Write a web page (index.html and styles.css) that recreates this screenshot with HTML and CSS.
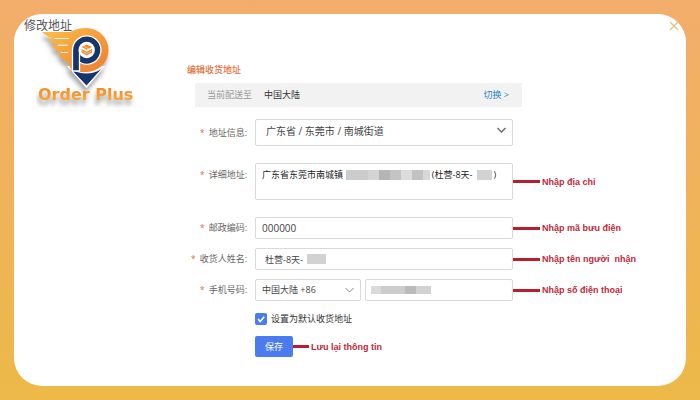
FILE: index.html
```
<!DOCTYPE html>
<html lang="zh-CN">
<head>
	<meta charset="utf-8">
	<title>修改地址</title>
	<link rel="stylesheet" href="styles.css">
</head>
<body>
	<div class="card">
		<header class="header">
			<h1 class="title">修改地址</h1>
			<button type="button" class="close" aria-label="Close">
				<svg width="10" height="10" viewBox="0 0 10 10"><path d="M1 1L9 9M9 1L1 9" stroke="#d8c98a" stroke-width="1.4"/></svg>
			</button>
		</header>
		<main class="main">
			<div class="brand">
				<svg class="logo" viewBox="36 22 104 86" role="img" aria-label="Order Plus">
					<defs>
						<linearGradient id="wing" x1="0" y1="0" x2="1" y2="1">
							<stop offset="0" stop-color="#fbc04a"/>
							<stop offset="1" stop-color="#ef7d2c"/>
						</linearGradient>
						<linearGradient id="word" x1="0" y1="0" x2="0" y2="1">
							<stop offset="0" stop-color="#ee8526"/>
							<stop offset="1" stop-color="#f9b03c"/>
						</linearGradient>
						<filter id="shadow" x="-20%" y="-20%" width="150%" height="170%">
							<feDropShadow dx="-1" dy="5" stdDeviation="2" flood-color="#555" flood-opacity="0.5"/>
						</filter>
					</defs>
					<g filter="url(#shadow)">
						<path d="M67 66L86.500 88L105 66Z" fill="#fff"/>
						<path d="M42 32H70C75 29.500 80 28 86.500 28A22 22 0 0 1 86.500 72H71L69 63C64 61 60 57 58 52.500H63C58 51.500 54 49 51 45H61C54 44 50 42 48 38.500H58C51 38.500 46 36 42 32Z" fill="url(#wing)"/>
						<path d="M54 38.500H69M58 45.200H68M61 52.500H68" stroke="#fff" stroke-width="0.900"/>
						<path d="M68.500 67C79 75 94 75 103.500 67L86.500 86Z" fill="#12366b" stroke="#fff" stroke-width="0.900"/>
						<path d="M72.500 71V50A14.200 14.200 0 1 1 79.500 62.300V71Z" fill="#12366b" stroke="#fff" stroke-width="1.300"/>
						<circle cx="86.700" cy="50" r="8.200" fill="#fff"/>
						<path d="M79.500 50V63" stroke="#fff" stroke-width="1.300"/>
						<path d="M86.700 44.500L92 47L86.700 49.700L81.500 47ZM81.500 49L86.700 51.800L92 49V52.500L86.700 55.500L81.500 52.500Z" fill="#f08a2c"/>
						<path d="M84 46.500L89 49M82 51L86.700 53.500L91.500 51" stroke="#fbd08c" stroke-width="0.800" fill="none"/>
					</g>
					<text class="logo-text" x="38" y="100" fill="url(#word)" filter="url(#shadow)">Order Plus</text>
				</svg>
			</div>
			<form class="form">
				<h2 class="subtitle">编辑收货地址</h2>
				<div class="region">
					<span class="region-label">当前配送至</span>
					<span>中国大陆</span>
					<a class="switch" href="#">切换 &gt;</a>
				</div>

				<div class="row row-area">
					<label class="label" for="area">地址信息:</label>
					<div class="field">
						<select id="area" class="control area">
							<option>广东省 / 东莞市 / 南城街道</option>
						</select>
						<svg class="arrow" width="9" height="6" viewBox="0 0 9 6"><path d="M0.500 1L4.500 5L8.500 1" fill="none" stroke="#666" stroke-width="1.300"/></svg>
					</div>
				</div>

				<div class="row row-address">
					<label class="label" for="address">详细地址:</label>
					<div class="field">
						<textarea id="address" class="control address">广东省东莞市南城镇&nbsp;&nbsp;&nbsp;&nbsp;&nbsp;&nbsp;&nbsp;&nbsp;&nbsp;&nbsp;&nbsp;&nbsp;&nbsp;&nbsp;&nbsp;&nbsp;&nbsp;&nbsp;&nbsp;&nbsp;&nbsp;&nbsp;&nbsp;&nbsp;&nbsp;&nbsp;&nbsp;&nbsp;&nbsp;&nbsp;&nbsp;&nbsp;&nbsp;&nbsp;&nbsp;&nbsp;&nbsp;&nbsp;(杜营-8天-&nbsp;&nbsp;&nbsp;&nbsp;&nbsp;&nbsp;&nbsp;&nbsp;&nbsp;)</textarea>
						<span class="mask mask-street"></span>
						<span class="mask mask-code"></span>
					</div>
					<span class="note">Nhập địa chỉ</span>
				</div>

				<div class="row row-zip">
					<label class="label" for="zip">邮政编码:</label>
					<div class="field"><input id="zip" class="control" type="text" value="000000"></div>
					<span class="note">Nhập mã bưu điện</span>
				</div>

				<div class="row">
					<label class="label" for="name">收货人姓名:</label>
					<div class="field">
						<input id="name" class="control name" type="text" value="杜营-8天-">
						<span class="mask mask-name"></span>
					</div>
					<span class="note">Nhập tên người&nbsp; nhận</span>
				</div>

				<div class="row">
					<label class="label" for="phone">手机号码:</label>
					<div class="phone">
						<div class="field">
							<select class="control" aria-label="国家/地区">
								<option>中国大陆 +86</option>
							</select>
							<svg class="arrow" width="9" height="6" viewBox="0 0 9 6"><path d="M0.500 1L4.500 5L8.500 1" fill="none" stroke="#888"/></svg>
						</div>
						<div class="field">
							<input id="phone" class="control" type="tel">
							<span class="mask mask-phone"></span>
						</div>
					</div>
					<span class="note">Nhập số điện thoại</span>
				</div>

				<div class="default">
					<input id="default" class="check" type="checkbox" checked>
					<label for="default">设置为默认收货地址</label>
				</div>

				<div class="actions">
					<button type="submit" class="save">保存</button>
					<span class="note note-save">Lưu lại thông tin</span>
				</div>
			</form>
		</main>
	</div>
</body>
</html>
```
FILE: styles.css
```
* {
	box-sizing: border-box;
}
body {
	margin: 0;
	min-height: 100vh;
	padding: 14px;
	display: flex;
	background: linear-gradient(#f2ad6b, #edb948);
	font-family: "Open Sans", "Noto Sans CJK SC", sans-serif;
	font-size: 9px;
	line-height: 12px;
	color: #333;
}
.card {
	flex: 1;
	min-width: 0;
	background: #fff;
	border-radius: 28px;
}
.header {
	display: flex;
	justify-content: space-between;
	align-items: center;
	padding: 3px 7px 0 10px;
}
.title {
	margin: 0;
	font-size: 12px;
	line-height: 18px;
	font-weight: normal;
	color: #555;
}
.close {
	display: flex;
	padding: 0;
	border: none;
	background: none;
	cursor: pointer;
}
.main {
	display: grid;
	grid-template-columns: 173px minmax(0, 1fr);
}
.brand {
	padding-left: 22px;
	margin-top: -13px;
}
.logo {
	display: block;
	width: 104px;
	height: 86px;
}
.logo-text {
	font-family: "DejaVu Sans", sans-serif;
	font-size: 16px;
	font-weight: bold;
}

/* form */
.form {
	padding-top: 27px;
}
.subtitle {
	margin: 0 0 5px;
	font-size: 9px;
	line-height: 16px;
	font-weight: 500;
	color: #e2703a;
}
.region {
	display: flex;
	align-items: center;
	gap: 12px;
	max-width: 327px;
	height: 24px;
	margin: 0 0 12px 8px;
	padding: 0 13px 0 12px;
	background: #f2f2f2;
}
.region-label {
	color: #999;
}
.switch {
	margin-left: auto;
	color: #2f86c0;
	text-decoration: none;
}
.row {
	display: grid;
	grid-template-columns: 60px minmax(0, 258px) minmax(0, 1fr);
	column-gap: 8px;
	align-items: center;
	margin-bottom: 9px;
}
.row-area,
.row-address {
	margin-bottom: 17px;
}
.label {
	text-align: right;
	white-space: nowrap;
	color: #666;
}
.label::before {
	content: "*";
	margin-right: 4px;
	color: #e2703a;
}
.row-address .label {
	align-self: start;
	padding-top: 6px;
}
.field {
	position: relative;
	display: flex;
}
.control {
	display: block;
	width: 100%;
	height: 22px;
	margin: 0;
	padding: 0 6px;
	border: 1px solid #d9d9d9;
	border-radius: 2px;
	background: #fff;
	font: inherit;
	color: #444;
	appearance: none;
	outline: none;
}
.area {
	height: 27px;
	padding: 0 10px 4px;
	font-size: 10px;
}
.address {
	height: 37px;
	padding: 5px 6px;
	resize: none;
	overflow: hidden;
	color: #222;
}
.row-zip .control {
	font-size: 10px;
}
.name {
	padding-left: 9px;
}
.arrow {
	position: absolute;
	right: 7px;
	top: 8px;
	pointer-events: none;
}
.phone {
	display: grid;
	grid-template-columns: 106px minmax(0, 1fr);
	gap: 4px;
}

/* blurred out personal data */
.mask {
	position: absolute;
	height: 10px;
	background: #d2d2d2;
}
.mask-street {
	left: 91px;
	top: 7px;
	width: 84px;
	background: linear-gradient(90deg, #ccc 0 22px, #d4d4d4 22px 33px, #b5b5b5 33px 44px, #c4c4c4 44px 55px, #dcdcdc 55px 66px, #c2c2c2 66px 77px, #d8d8d8 77px);
}
.mask-code {
	left: 222px;
	top: 7px;
	width: 15px;
}
.mask-name {
	left: 52px;
	top: 6px;
	width: 19px;
}
.mask-phone {
	left: 6px;
	top: 7px;
	width: 60px;
	height: 8px;
	background: linear-gradient(90deg, #dadada 0 10px, #ccc 10px 34px, #bbb 34px 45px, #d2d2d2 45px);
}

/* red remarks */
.note {
	display: flex;
	align-items: center;
	gap: 2px;
	margin-left: -8px;
	font-family: "Liberation Sans", Arial, sans-serif;
	font-weight: bold;
	white-space: nowrap;
	color: #c0283a;
}
.note::before {
	content: "";
	width: 27px;
	height: 3px;
	background: #b81e30;
}
.note-save {
	margin-left: 0;
}
.note-save::before {
	width: 16px;
}
.default {
	display: flex;
	align-items: center;
	gap: 4px;
	margin: 12px 0 11px 68px;
}
.check {
	width: 12px;
	height: 12px;
	margin: 0;
	appearance: none;
	border-radius: 2px;
	background: #4a7cf0;
}
.check:checked {
	background-image: url("data:image/svg+xml,%3Csvg xmlns='http://www.w3.org/2000/svg' viewBox='0 0 12 12'%3E%3Cpath d='M3 6l2.200 2.500L9.200 3.800' fill='none' stroke='%23fff' stroke-width='1.600'/%3E%3C/svg%3E");
}
.actions {
	display: flex;
	align-items: center;
	margin-left: 68px;
}
.save {
	width: 38px;
	height: 21px;
	padding: 0;
	border: none;
	border-radius: 2px;
	background: #4a7cf0;
	font: inherit;
	color: #fff;
	cursor: pointer;
}
```
